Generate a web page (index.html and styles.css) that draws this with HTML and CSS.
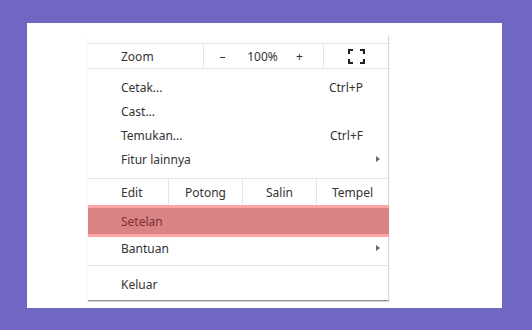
FILE: index.html
```html
<!DOCTYPE html>
<html>
<head>
<meta charset="utf-8">
<link rel="stylesheet" href="styles.css">
</head>
<body>
<div class="card">
  <div class="menu">
    <div class="zoom-row">
      <div class="cell label">Zoom</div>
      <div class="cell controls">
        <span class="minus">–</span>
        <span class="pct">100%</span>
        <span class="plus">+</span>
      </div>
      <div class="cell full">
        <svg width="17" height="15" viewBox="0 0 17 15">
          <path d="M1 5V1H5M12 1H16V5M16 10V14H12M5 14H1V10" fill="none" stroke="#222" stroke-width="2.2"/>
        </svg>
      </div>
    </div>
    <div class="group">
      <div class="item"><span>Cetak...</span><span class="key">Ctrl+P</span></div>
      <div class="item"><span>Cast...</span></div>
      <div class="item"><span>Temukan...</span><span class="key">Ctrl+F</span></div>
      <div class="item"><span>Fitur lainnya</span><span class="arrow"></span></div>
    </div>
    <div class="edit-row">
      <div class="cell label">Edit</div>
      <div class="cell mid">Potong</div>
      <div class="cell mid">Salin</div>
      <div class="cell mid">Tempel</div>
    </div>
    <div class="item selected"><span>Setelan</span></div>
    <div class="item help"><span>Bantuan</span><span class="arrow"></span></div>
    <div class="sep"></div>
    <div class="group last">
      <div class="item"><span>Keluar</span></div>
    </div>
  </div>
</div>
</body>
</html>
```
FILE: styles.css
```css
html, body {
  margin: 0;
  padding: 0;
}
body {
  width: 532px;
  height: 330px;
  background: #6f67c2;
  padding: 23px 0 0 27px;
  box-sizing: border-box;
  font-family: "Noto Sans", "Open Sans", sans-serif;
  font-size: 12px;
  color: #333;
  overflow: hidden;
}
.card {
  width: 475px;
  height: 285px;
  background: #fff;
  padding: 12px 0 0 61px;
  box-sizing: border-box;
}
.menu {
  width: 301px;
  box-sizing: border-box;
  border-right: 1px solid #d6d6d6;
  border-bottom: 1px solid #8e8e8e;
  box-shadow: 0 1px 1px rgba(0,0,0,0.15);
  padding-top: 8px;
}
.zoom-row {
  display: grid;
  grid-template-columns: 115px 120px 1fr;
  border-top: 1px solid #e6e6e6;
  border-bottom: 1px solid #e6e6e6;
  height: 24px;
}
.cell {
  display: flex;
  align-items: center;
  line-height: 22px;
  padding-top: 2px;
}
.label {
  padding-left: 33px;
}
.controls, .full, .mid {
  border-left: 1px solid #e6e6e6;
}
.controls span {
  text-align: center;
}
.minus { width: 37px; }
.pct { width: 43px; }
.plus { width: 31px; }
.full {
  justify-content: center;
  padding-top: 1px;
}
.full svg {
  display: block;
}
.group {
  padding: 6px 0 7px;
}
.item {
  display: flex;
  align-items: center;
  justify-content: space-between;
  height: 24px;
  padding: 0 8px 0 33px;
}
.key {
  margin-right: 17px;
}
.arrow {
  width: 0;
  height: 0;
  border-top: 3.5px solid transparent;
  border-bottom: 3.5px solid transparent;
  border-left: 4px solid #666;
  margin-right: 0;
}
.edit-row {
  display: grid;
  grid-template-columns: 80px 74px 74px 1fr;
  border-top: 1px solid #e6e6e6;
  height: 26px;
}
.edit-row .cell {
  line-height: 24px;
}
.mid {
  justify-content: center;
}
.selected {
  height: 26px;
  background: #d98384;
  border-top: 3px solid #ffa5a5;
  border-bottom: 3px solid #ffa5a5;
  margin-right: -1px;
  color: #7c2f33;
}
.help {
  height: 22px;
}
.sep {
  height: 1px;
  background: #e2e2e2;
  margin-top: 6px;
}
.group.last {
  padding: 6px 0 4px;
}
```
